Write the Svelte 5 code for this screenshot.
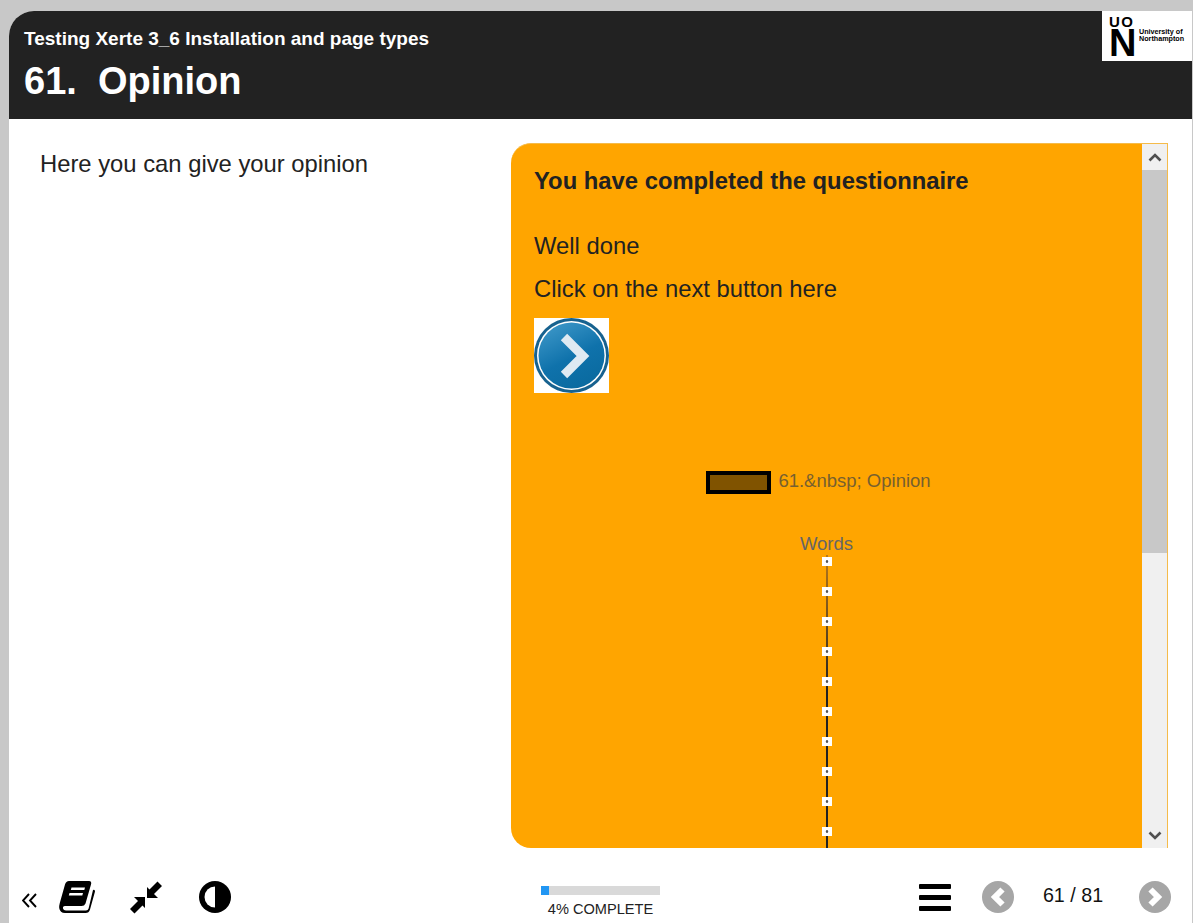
<script>
  const ticks = Array.from({ length: 10 }, (_, i) => i);
</script>

<div class="page">
  <header class="top">
    <div class="titles">
      <div class="course">Testing Xerte 3_6 Installation and page types</div>
      <h1>61.&nbsp; Opinion</h1>
    </div>
    <div class="logo">
      <div class="uon">
        <span class="uo">UO</span>
        <span class="n">N</span>
      </div>
      <div class="uni">University of<br />Northampton</div>
    </div>
  </header>

  <main class="content">
    <p class="intro">Here you can give your opinion</p>
    <section class="panel">
      <div class="inner">
        <h2>You have completed the questionnaire</h2>
        <p class="done">Well done</p>
        <p class="next">Click on the next button here</p>
        <div class="nextimg">
          <svg width="75" height="75" viewBox="0 0 75 75">
            <defs>
              <linearGradient id="blue" x1="0.2" y1="0" x2="0.7" y2="1">
                <stop offset="0" stop-color="#3d97c8" />
                <stop offset="0.55" stop-color="#0f72ab" />
                <stop offset="1" stop-color="#0a6a9f" />
              </linearGradient>
            </defs>
            <circle cx="37.5" cy="37.5" r="37.5" fill="#17628f" />
            <circle cx="37.5" cy="37.5" r="34.5" fill="#fff" />
            <circle cx="37.5" cy="37.5" r="33" fill="url(#blue)" />
            <path d="M30 19 L49 38 L30 57" fill="none" stroke="#dfeaf2" stroke-width="9" />
          </svg>
        </div>
        <div class="chart">
          <div class="legend">
            <span class="swatch"></span>
            <span>61.&amp;nbsp; Opinion</span>
          </div>
          <div class="axis-title">Words</div>
          <div class="axis">
            {#each ticks as t}
              <span class="tick"></span>
            {/each}
          </div>
        </div>
      </div>
      <div class="scrollbar">
        <button class="arrow" aria-label="Scroll up">
          <svg width="14" height="9" viewBox="0 0 14 9"><path d="M1.5 7.5 L7 2 L12.5 7.5" fill="none" stroke="#505050" stroke-width="2.6" /></svg>
        </button>
        <div class="track"><div class="thumb"></div></div>
        <button class="arrow" aria-label="Scroll down">
          <svg width="14" height="9" viewBox="0 0 14 9"><path d="M1.5 1.5 L7 7 L12.5 1.5" fill="none" stroke="#505050" stroke-width="2.6" /></svg>
        </button>
      </div>
    </section>
  </main>

  <footer class="bar">
    <div class="left">
      <svg class="collapse" width="15" height="15" viewBox="0 0 15 15">
        <path d="M7 1 L1 7.5 L7 14 M14 1 L8 7.5 L14 14" fill="none" stroke="#000" stroke-width="1.9" />
      </svg>
      <svg class="book" width="36" height="32" viewBox="0 0 36 32">
        <path d="M10 0 H30 Q33 0 32 3.5 L26.5 22.5 Q25.5 25 22.5 25 H6 Q3.5 25 4 27.5 Q4.5 29.5 7 29.5 H27 Q29 29.5 29.6 27.5 L34 9 Q36 8 36 10.5 L31 28.5 Q30 32 26.5 32 H6 Q1 32 0.2 27 Q0 25 0.8 22 L6 3.5 Q7 0 10 0 Z" fill="#000" />
        <path d="M12.5 6.5 H26 L25.3 9 H11.8 Z M10.5 12 H24 L23.3 14.5 H9.8 Z" fill="#fff" />
      </svg>
      <svg class="compress" width="32" height="33" viewBox="0 0 32 33">
        <path d="M17 6 V17 H28 L24 13 L32 5 L27.5 0.5 L19.5 8.5 Z M15 16 H4 L8 20 L0 28 L4.5 32.5 L12.5 24.5 L15 27 Z" fill="#000" />
      </svg>
      <svg class="contrast" width="32" height="32" viewBox="0 0 32 32">
        <circle cx="16" cy="16" r="16" fill="#000" />
        <path d="M16 5.5 A10.5 10.5 0 0 0 16 26.5 Z" fill="#fff" />
      </svg>
    </div>
    <div class="progress">
      <div class="meter"><div class="fill"></div></div>
      <div class="label">4% COMPLETE</div>
    </div>
    <div class="right">
      <div class="menu"><span></span><span></span><span></span></div>
      <svg class="round" width="32" height="32" viewBox="0 0 32 32">
        <circle cx="16" cy="16" r="16" fill="#a6a6a6" />
        <path d="M20.5 8.5 L13 16 L20.5 23.5" fill="none" stroke="#fff" stroke-width="6" />
      </svg>
      <span class="count">61 / 81</span>
      <svg class="round" width="32" height="32" viewBox="0 0 32 32">
        <circle cx="16" cy="16" r="16" fill="#a6a6a6" />
        <path d="M11.5 8.5 L19 16 L11.5 23.5" fill="none" stroke="#fff" stroke-width="6" />
      </svg>
    </div>
  </footer>
</div>

<style>
  :global(body) {
    margin: 0;
    background: #c8c8c8;
    font-family: "Liberation Sans", Arial, sans-serif;
    color: #222;
    overflow: hidden;
  }

  .page {
    box-sizing: border-box;
    height: 923px;
    margin: 11px 1px 0 9px;
    display: flex;
    flex-direction: column;
    background: #fff;
    border-top-left-radius: 25px;
    overflow: hidden;
  }

  .top {
    height: 108px;
    flex: none;
    display: flex;
    justify-content: space-between;
    align-items: flex-start;
    background: #222;
    color: #fff;
  }

  .titles {
    padding: 16px 0 0 15px;
  }

  .course {
    font-size: 19px;
    line-height: 24px;
    font-weight: bold;
  }

  h1 {
    margin: 10px 0 0;
    font-size: 38px;
    line-height: 40px;
    font-weight: bold;
  }

  .logo {
    box-sizing: border-box;
    width: 90px;
    height: 50px;
    padding: 3px 0 0 7px;
    display: flex;
    gap: 1px;
    background: #fff;
    color: #000;
  }

  .uon {
    width: 29px;
    flex: none;
    display: flex;
    flex-direction: column;
    font-weight: bold;
    line-height: 1;
  }

  .uo {
    font-size: 15px;
    letter-spacing: 1.5px;
    height: 14px;
  }

  .n {
    font-size: 38px;
    height: 30px;
    line-height: 30px;
  }

  .uni {
    margin-top: 14px;
    font-size: 7.2px;
    line-height: 7px;
    font-weight: bold;
    white-space: nowrap;
  }

  .content {
    height: 705px;
    flex: none;
    margin-top: 24px;
    display: flex;
  }

  .intro {
    width: 502px;
    flex: none;
    margin: 7px 0 0;
    padding-left: 31px;
    box-sizing: border-box;
    font-size: 23.8px;
    line-height: 28px;
  }

  .panel {
    width: 657px;
    flex: none;
    display: flex;
    background: #ffa500;
    border-radius: 20px 0 0 20px;
    overflow: hidden;
    box-sizing: border-box;
    border: 1px solid #f5bb4a;
    border-left: 0;
    border-bottom: 0;
  }

  .inner {
    flex: 1;
    overflow: hidden;
    padding: 23px 23px 0;
    box-sizing: border-box;
  }

  h2 {
    margin: 0;
    font-size: 23.8px;
    line-height: 28px;
    font-weight: bold;
  }

  .done {
    margin: 37px 0 0;
    font-size: 23.8px;
    line-height: 28px;
  }

  .next {
    margin: 15px 0 0;
    font-size: 23.8px;
    line-height: 28px;
  }

  .nextimg {
    width: 75px;
    height: 75px;
    margin-top: 15px;
    background: #fff;
  }

  .nextimg svg {
    display: block;
  }

  .chart {
    margin-top: 75px;
    display: flex;
    flex-direction: column;
    align-items: center;
    color: #77602f;
    font-size: 18.5px;
  }

  .legend {
    display: flex;
    align-items: center;
    gap: 7px;
    height: 26px;
    padding-right: 16px;
  }

  .swatch {
    box-sizing: border-box;
    width: 65px;
    height: 23px;
    margin-top: 2px;
    border: 4px solid #000;
    background: #805300;
  }

  .axis-title {
    margin-top: 38px;
    line-height: 24px;
    color: #666;
  }

  .axis {
    width: 2px;
    height: 300px;
    margin-top: -1px;
    display: flex;
    flex-direction: column;
    align-items: center;
    gap: 21px;
    padding-top: 2px;
    background: linear-gradient(#b8791a, #222 45%);
  }

  .tick {
    width: 10px;
    height: 9px;
    flex: none;
    background: radial-gradient(circle, #555 0 1px, #fff 1.6px);
  }

  .scrollbar {
    width: 25px;
    flex: none;
    display: flex;
    flex-direction: column;
    background: #f0f0f0;
  }

  .arrow {
    height: 26px;
    flex: none;
    padding: 0;
    border: 0;
    display: flex;
    align-items: center;
    justify-content: center;
    background: #f0f0f0;
  }

  .track {
    flex: 1;
  }

  .thumb {
    height: 383px;
    background: #c8c8c8;
  }

  .bar {
    flex: 1;
    display: grid;
    grid-template-columns: 1fr auto 1fr;
    align-items: start;
    padding-top: 33px;
  }

  .left {
    display: flex;
    align-items: flex-start;
  }

  .collapse {
    margin: 12px 0 0 13px;
  }

  .book {
    margin-left: 22px;
  }

  .compress {
    margin-left: 35px;
  }

  .contrast {
    margin-left: 37px;
  }

  .progress {
    width: 119px;
    padding-top: 5px;
    display: flex;
    flex-direction: column;
    align-items: center;
  }

  .meter {
    width: 100%;
    height: 9px;
    background: #d9d9d9;
  }

  .fill {
    width: 8px;
    height: 100%;
    background: #2196f3;
  }

  .label {
    margin-top: 5px;
    font-size: 14.6px;
    line-height: 18px;
    white-space: nowrap;
  }

  .right {
    display: flex;
    justify-content: flex-end;
    align-items: center;
    height: 32px;
    padding-right: 21px;
  }

  .menu {
    width: 32px;
    display: flex;
    flex-direction: column;
    gap: 6px;
  }

  .menu span {
    height: 5px;
    background: #000;
    border-radius: 1px;
  }

  .right .round:first-of-type {
    margin-left: 31px;
  }

  .count {
    width: 125px;
    box-sizing: border-box;
    padding: 0 7px 3px 0;
    text-align: center;
    font-size: 19.7px;
    color: #111;
  }
</style>
